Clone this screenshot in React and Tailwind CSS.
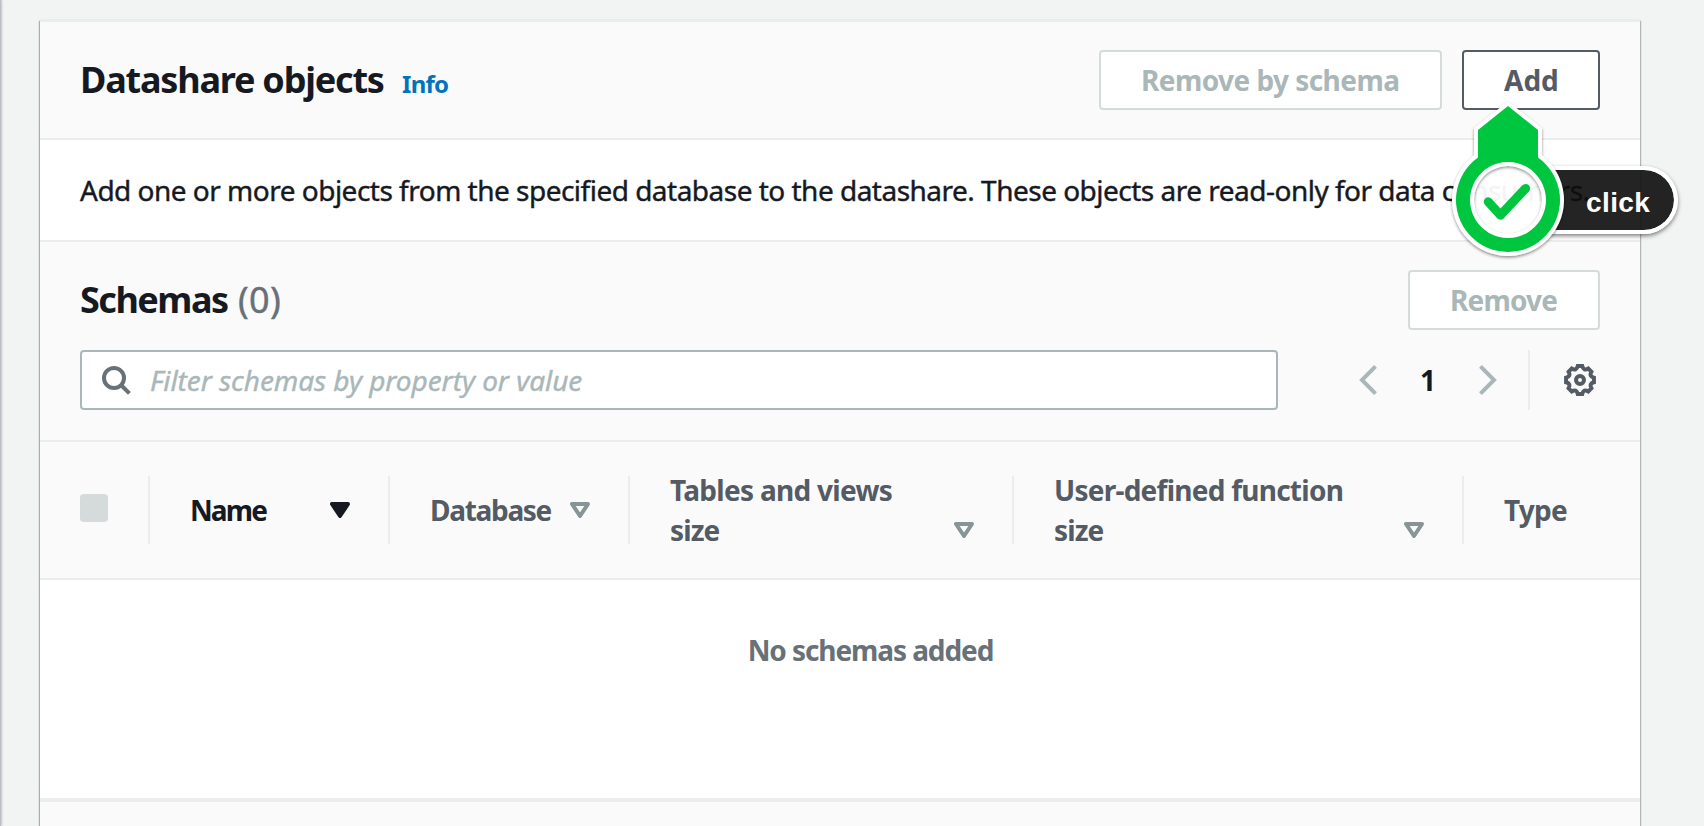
const polar = (radius, degrees) => {
  const a = (degrees * Math.PI) / 180;
  return `${(16 + radius * Math.sin(a)).toFixed(2)} ${(16 - radius * Math.cos(a)).toFixed(2)}`;
};

// Eight flat teeth joined by concave valleys.
const GEAR_PATH =
  [0, 45, 90, 135, 180, 225, 270, 315]
    .map((d, i) => `${i ? "L" : "M"}${polar(14.1, d - 9)} L${polar(14.1, d + 9)} Q${polar(9.4, d + 22.5)} ${polar(14.1, d + 36)}`)
    .join(" ") + " Z";

function Button({ children, className }) {
  return (
    <button className={`flex h-[60px] items-center rounded-[4px] border-2 bg-white pl-[40px] text-[28px] leading-[40px] font-bold whitespace-nowrap ${className}`}>
      {children}
    </button>
  );
}

function SearchIcon() {
  return (
    <svg className="h-8 w-8 shrink-0" viewBox="0 0 32 32" fill="none" stroke="#687078" strokeWidth="4">
      <circle cx="14" cy="14" r="10" />
      <path d="M21 21l8.4 8.4" />
    </svg>
  );
}

function Chevron({ flip }) {
  return (
    <svg className="h-8 w-[18px] shrink-0" viewBox="0 0 18 32" fill="none" stroke="#aab7b8" strokeWidth="4">
      <path d={flip ? "M1.5 2.4L15 16L1.5 29.6" : "M16.5 2.4L3 16L16.5 29.6"} />
    </svg>
  );
}

function GearIcon() {
  return (
    <svg className="h-8 w-8 shrink-0" viewBox="0 0 32 32" fill="none" stroke="#545b64" strokeWidth="4">
      <path d={GEAR_PATH} />
      <circle cx="16" cy="16" r="4" />
    </svg>
  );
}

function SortIcon({ active }) {
  return (
    <svg className="h-4 w-5 shrink-0" viewBox="0 0 20 16" strokeWidth="4" strokeLinejoin="round" stroke={active ? "#16191f" : "#879596"} fill={active ? "#16191f" : "#fafafa"}>
      <path d="M2 2H18L10 14Z" />
    </svg>
  );
}

function Column({ className, labelClass = "text-[#545b64]", lines, active, sortable = true, tracking }) {
  const tall = lines.length > 1;
  return (
    <div className={`flex h-[68px] justify-between pr-[38px] pl-[40px] text-[28px] leading-[40px] font-bold whitespace-nowrap ${tall ? "items-end" : "items-center"} ${className}`}>
      <div className={`${labelClass} ${tall ? "-mb-[6px]" : ""}`}>
        {lines.map((line, i) => (
          <div key={line} className={tracking[i]}>{line}</div>
        ))}
      </div>
      {sortable && (
        <div className={tall ? "pb-[6px]" : ""}>
          <SortIcon active={active} />
        </div>
      )}
    </div>
  );
}

function ClickMarker() {
  return (
    <div className="absolute top-[90px] left-[1440px] h-[180px] w-[264px]">
      <div className="absolute top-[76px] left-[108px] h-[68px] w-[130px] rounded-r-[34px] border-4 border-l-0 border-white bg-[#0e0e0e]/91 bg-clip-padding pt-[13px] pl-[38px] font-['Liberation_Sans',sans-serif] text-[28px] leading-[40px] font-bold tracking-[0.4px] text-white shadow-[0_2px_4px_rgba(0,0,0,0.5)]">
        click
      </div>
      <svg className="absolute top-0 left-0 h-[180px] w-[140px]" viewBox="1440 90 140 180">
        <defs>
          <filter id="lift" x="-20%" y="-20%" width="140%" height="140%">
            <feDropShadow dx="0" dy="1.5" stdDeviation="1.5" floodColor="#000" floodOpacity="0.45" />
          </filter>
        </defs>
        <circle cx="1508" cy="200" r="34.5" fill="#fff" fillOpacity="0.95" />
        <g filter="url(#lift)">
          <path
            fillRule="evenodd"
            fill="#fff"
            d="M1508 101.5L1542 128.2V155.5A56 56 0 1 1 1474 155.5V128.2Z M1508 166a34 34 0 1 0 .01 0Z"
          />
        </g>
        <path
          fillRule="evenodd"
          fill="#00c63f"
          d="M1508 106L1538 130V157.5A52 52 0 1 1 1478 157.5V130Z M1508 162a38 38 0 1 0 .01 0Z"
        />
        <path d="M1488.2 201.8L1500.5 215.2L1525.6 188.4" fill="none" stroke="#00c63f" strokeWidth="9" strokeLinecap="round" strokeLinejoin="round" />
      </svg>
    </div>
  );
}

export default function App() {
  return (
    <div className="relative flex h-[826px] w-[1704px] overflow-hidden bg-[#f2f3f3] font-['Noto_Sans',sans-serif] text-[#16191f]">
      <div className="w-px shrink-0 bg-[#b9bec4] shadow-[1px_0_2px_rgba(0,28,36,0.3)]" />
      <main className="mt-[20px] ml-[39px] flex h-[820px] w-[1600px] shrink-0 flex-col border-t-2 border-[#eaeded] bg-[#fafafa] shadow-[0_1px_2px_rgba(0,28,36,0.45),1px_1px_1px_rgba(0,28,36,0.15),-1px_1px_1px_rgba(0,28,36,0.2)]">
        <header className="flex h-[118px] items-center border-b-2 border-[#eaeded] px-10">
          <h2 className="w-[322px] text-[36px] leading-[44px] font-bold tracking-[-1.2px] whitespace-nowrap">Datashare objects</h2>
          <a className="pt-[8px] text-[24px] leading-[30px] font-bold tracking-[-0.7px] text-[#0073bb]">Info</a>
          <div className="ml-auto flex gap-5">
            <Button className="w-[343px] border-[#d5dbdb] tracking-[-0.55px] text-[#aab7b8]">Remove by schema</Button>
            <Button className="w-[138px] border-[#545b64] text-[#545b64]">Add</Button>
          </div>
        </header>

        <p className="flex h-[102px] items-center border-b-2 border-[#eaeded] bg-white px-10 text-[28px] leading-[40px] tracking-[-0.51px] whitespace-nowrap [-webkit-text-stroke:0.4px_#16191f]">
          Add one or more objects from the specified database to the datashare. These objects are read-only for data consumers.
        </p>

        <section className="flex h-[200px] flex-col gap-5 border-b-2 border-[#eaeded] px-10 pt-[28px]">
          <div className="flex h-[60px] items-center justify-between">
            <h2 className="flex text-[36px] leading-[44px] font-bold whitespace-nowrap">
              <span className="w-[158px] tracking-[-1.5px]">Schemas</span>
              <span className="font-normal tracking-[0.3px] text-[#687078] [-webkit-text-stroke:0.4px_#687078]">(0)</span>
            </h2>
            <Button className="w-[192px] border-[#d5dbdb] tracking-[-0.8px] text-[#aab7b8]">Remove</Button>
          </div>
          <div className="flex h-[60px] items-center">
            <div className="flex h-[60px] w-[1198px] items-center gap-[18px] rounded-[4px] border-2 border-[#aab7b8] bg-white pl-[18px]">
              <SearchIcon />
              <span className="text-[28px] leading-[40px] tracking-[-0.06px] whitespace-nowrap text-[#aab7b8] italic [-webkit-text-stroke:0.4px_#aab7b8]">Filter schemas by property or value</span>
            </div>
            <div className="ml-[81px] flex w-[138px] items-center justify-between">
              <Chevron />
              <span className="text-[28px] leading-[40px] font-bold">1</span>
              <Chevron flip />
            </div>
            <div className="ml-[31px] h-[60px] w-[2px] bg-[#eaeded]" />
            <div className="ml-auto pr-[4px]">
              <GearIcon />
            </div>
          </div>
        </section>

        <div className="flex h-[138px] shrink-0 items-center border-b-2 border-[#eaeded]">
          <div className="flex h-[68px] w-[110px] items-start border-r-2 border-[#eaeded] pt-[18px] pl-10">
            <span className="h-7 w-7 rounded-[4px] bg-[#d5dbdb]" />
          </div>
          <Column className="w-[240px] border-r-2 border-[#eaeded]" labelClass="text-[#16191f]" lines={["Name"]} tracking={["tracking-[-1.9px]"]} active />
          <Column className="w-[240px] border-r-2 border-[#eaeded]" lines={["Database"]} tracking={["tracking-[-1.3px]"]} />
          <Column className="w-[384px] border-r-2 border-[#eaeded]" lines={["Tables and views", "size"]} tracking={["tracking-[-0.7px]", "tracking-[-0.9px]"]} />
          <Column className="w-[450px] border-r-2 border-[#eaeded]" lines={["User-defined function", "size"]} tracking={["tracking-[-0.75px]", "tracking-[-0.9px]"]} />
          <Column className="w-[176px]" lines={["Type"]} tracking={["tracking-[-0.8px]"]} sortable={false} />
        </div>

        <div className="flex h-[222px] shrink-0 justify-center border-b-4 border-[#eaeded] bg-white pt-[50px] pl-[61px] text-[28px] leading-[40px] font-bold tracking-[-1.08px] text-[#687078]">
          No schemas added
        </div>
      </main>
      <ClickMarker />
    </div>
  );
}
